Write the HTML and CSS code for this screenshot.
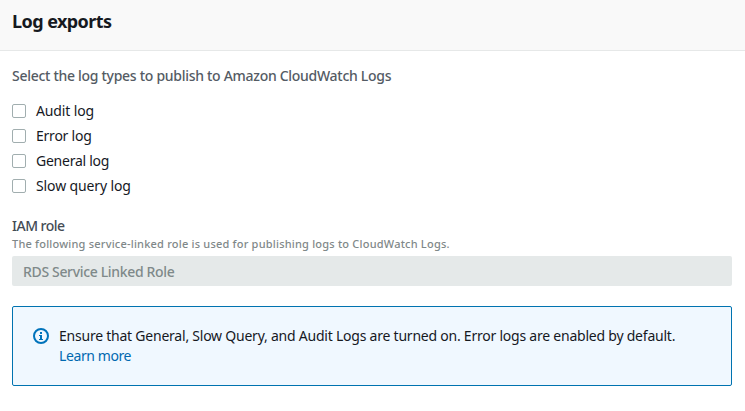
FILE: index.html
```html
<!DOCTYPE html>
<html lang="en">
<head>
<meta charset="utf-8">
<title>Log exports</title>
<link rel="stylesheet" href="styles.css">
</head>
<body>
<header class="header"><h1><span class="t-title">Log exports</span></h1></header>
<main class="content">
<p class="prompt"><span class="t-prompt">Select the log types to publish to Amazon CloudWatch Logs</span></p>
<div class="options">
<label class="option"><input type="checkbox"><span class="t-audit">Audit log</span></label>
<label class="option"><input type="checkbox"><span class="t-error">Error log</span></label>
<label class="option"><input type="checkbox"><span class="t-general">General log</span></label>
<label class="option"><input type="checkbox"><span class="t-slow">Slow query log</span></label>
</div>
<section class="role">
<h2><span class="t-role">IAM role</span></h2>
<p class="hint"><span class="t-hint">The following service-linked role is used for publishing logs to CloudWatch Logs.</span></p>
<div class="field"><span class="t-field">RDS Service Linked Role</span></div>
</section>
<aside class="notice">
<svg class="icon" viewBox="0 0 16 16" width="16" height="16"><circle cx="8" cy="8" r="7" fill="none" stroke="currentColor" stroke-width="2"/><path d="M7 4h2v2H7zM6 7h3v4h1v1H6v-1h1V8H6z" fill="currentColor"/></svg>
<div><div><span class="t-note">Ensure that General, Slow Query, and Audit Logs are turned on. Error logs are enabled by default.</span></div><a href="#"><span class="t-link">Learn more</span></a></div>
</aside>
</main>
</body>
</html>
```
FILE: styles.css
```css
* { box-sizing: border-box; }
body { margin: 0; background: #fff; color: #16191f; font: 14px/20px "Noto Sans", sans-serif; white-space: nowrap; }
h1, h2, p { margin: 0; }
.header { height: 51px; padding: 10px 12px; background: #f9f9f9; border-bottom: 1px solid #e6e8e8; }
h1 { font-size: 18px; line-height: 22px; font-weight: 700; }
.content { padding: 15px 13px 0 12px; }
.prompt { color: #545b64; font-weight: 500; }
.options { margin-top: 15px; }
.option { display: flex; align-items: center; height: 25px; padding-bottom: 5px; gap: 10px; }
.option input { appearance: none; width: 14px; height: 14px; margin: 0; border: 1px solid #a1aeaf; border-radius: 2px; background: #fff; }
.role { margin-top: 15px; }
h2 { font-size: 14px; line-height: 20px; font-weight: 500; color: #444b55; }
.hint { font-size: 11px; line-height: 16px; color: #7f8889; font-weight: 500; }
.field { height: 30px; margin-top: 4px; padding: 6px 11px; background: #e5e9e9; border-radius: 2px; color: #7f898a; font-weight: 500; }
.notice { display: flex; height: 80px; margin-top: 20px; padding: 19px 20px; gap: 10px; border: 1px solid #0073b0; border-radius: 2px; background: #f0f8ff; }
.icon { margin-top: 2px; color: #0073bb; }
a { color: #0069b0; text-decoration: none; }
.t-title { letter-spacing: -.56px; }
.t-prompt { letter-spacing: -.29px; }
.t-audit { letter-spacing: -.13px; }
.t-error { letter-spacing: -.23px; }
.t-general { letter-spacing: -.25px; }
.t-slow { letter-spacing: -.12px; }
.t-role { letter-spacing: -.5px; }
.t-hint { letter-spacing: .21px; }
.t-field { letter-spacing: -.34px; }
.t-note { letter-spacing: -.227px; }
.t-link { letter-spacing: -.4px; }
```
